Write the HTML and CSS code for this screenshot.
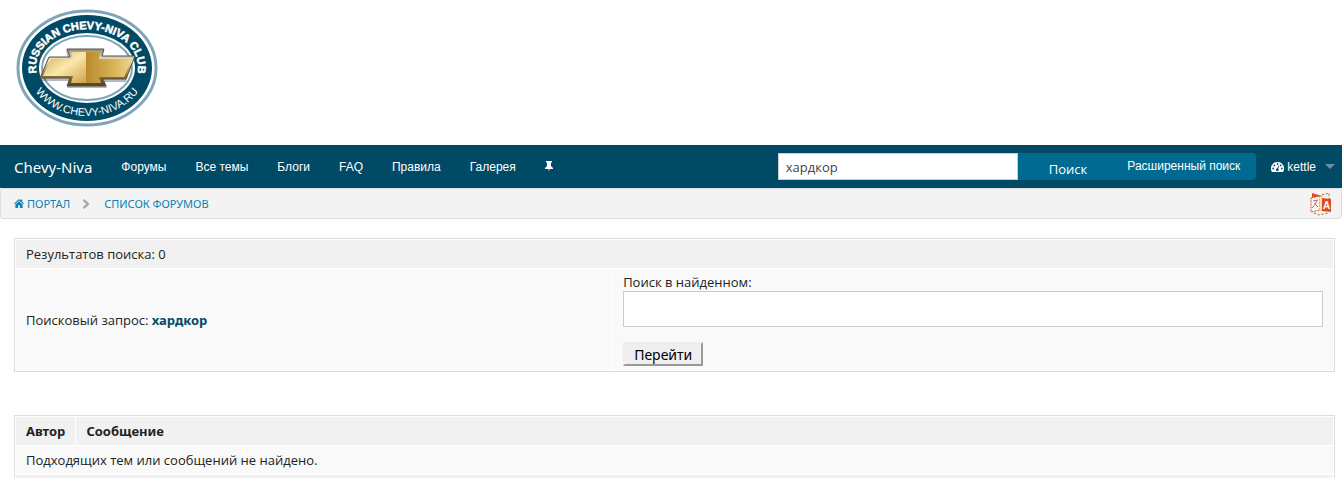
FILE: index.html
```html
<!DOCTYPE html>
<html lang="ru">
  <head>
    <meta charset="utf-8"/>
    <title>Chevy-Niva</title>
    <link rel="stylesheet" href="styles.css">
  </head>
  <body>
    <header class="header">
      <a class="logo" href="#" aria-label="Chevy-Niva">
        <svg width="144" height="120" viewBox="0 0 144 120">
          <defs>
            <linearGradient id="gold-left" x1="0" y1="0" x2="1" y2="1">
              <stop offset="0" stop-color="#d3a84c"/>
              <stop offset=".5" stop-color="#fae9ad"/>
              <stop offset="1" stop-color="#cfa14a"/>
            </linearGradient>
            <linearGradient id="gold-right" x1="0" y1="0" x2="1" y2="0">
              <stop offset="0" stop-color="#b88a2c"/>
              <stop offset=".6" stop-color="#d9b25a"/>
              <stop offset="1" stop-color="#f0d68e"/>
            </linearGradient>
            <linearGradient id="rim" x1="0" y1="0" x2="0" y2="1">
              <stop offset="0" stop-color="#8f8b80"/>
              <stop offset=".3" stop-color="#efe3c4"/>
              <stop offset=".7" stop-color="#98773a"/>
              <stop offset="1" stop-color="#4a4028"/>
            </linearGradient>
            <path id="arc-top" d="M24 72 A51 38 0 1 1 120 72"/>
            <path id="arc-bottom" d="M13 60 A59 48 0 0 0 131 60"/>
          </defs>
          <ellipse cx="72" cy="60" rx="69" ry="57" fill="#fff" stroke="#7fa6b8" stroke-width="3"/>
          <ellipse cx="72" cy="60" rx="65" ry="53" fill="#014a66"/>
          <ellipse cx="72" cy="60" rx="48" ry="35" fill="#fff"/>
          <ellipse cx="72" cy="60" rx="45" ry="32" fill="#fff" stroke="#7fa6b8" stroke-width="2"/>
          <path d="M35 51 H53 L51 42 H89 L87 49 H119 L111 74 H90 L92 80 H52 L54 73 H26 Z" fill="#263b43" opacity=".35"/>
          <path d="M34 49 H55 L52 41 H89 L87 48 H120 L111 71 H88 L91 78 H52 L55 70 H25 Z" fill="url(#rim)" stroke="#5c5138"/>
          <path d="M36 51 H58 L56 44 H71 V75 H56 L58 68 H28 Z" fill="url(#gold-left)"/>
          <path d="M71 44 H85 L84 51 H117 L109 69 H84 L86 75 H71 Z" fill="url(#gold-right)"/>
          <text class="logo-name"><textPath href="#arc-top" startOffset="50%">RUSSIAN CHEVY-NIVA CLUB</textPath></text>
          <text class="logo-site"><textPath href="#arc-bottom" startOffset="50%">WWW.CHEVY-NIVA.RU</textPath></text>
        </svg>
      </a>
    </header>

    <nav class="navbar">
      <a class="brand" href="#">Chevy-Niva</a>
      <ul class="menu">
        <li><a href="#">Форумы</a></li>
        <li><a href="#">Все темы</a></li>
        <li><a href="#">Блоги</a></li>
        <li><a href="#">FAQ</a></li>
        <li><a href="#">Правила</a></li>
        <li><a href="#">Галерея</a></li>
        <li>
          <a href="#" aria-label="Закрепить">
            <svg width="8" height="11" viewBox="0 0 8 11">
              <path d="M1 0 H7 V1 L6 2 V5 L8 7 V8 H4.5 L4 11 L3.5 8 H0 V7 L2 5 V2 L1 1 Z" fill="#fff"/>
            </svg>
          </a>
        </li>
      </ul>
      <form class="search">
        <input class="search-input" type="text" value="хардкор" aria-label="Поиск">
        <button class="search-button" type="button">Поиск</button>
        <a class="search-advanced" href="#">Расширенный поиск</a>
      </form>
      <a class="user" href="#">
        <svg width="13" height="10" viewBox="0 0 13 10">
          <path d="M6.500 0 A6.500 6.500 0 0 0 1 10 H12 A6.500 6.500 0 0 0 6.500 0 Z" fill="#fff"/>
          <g fill="#014a66">
            <circle cx="2.200" cy="6.500" r=".9"/>
            <circle cx="3.400" cy="3.400" r=".9"/>
            <circle cx="6.500" cy="2" r=".9"/>
            <circle cx="9.600" cy="3.400" r=".9"/>
            <circle cx="10.800" cy="6.500" r=".9"/>
            <circle cx="6.300" cy="7.800" r="1.400"/>
            <path d="M5.900 7.500 L7.300 3.600 L8 3.900 L6.900 7.900 Z"/>
          </g>
        </svg>
        kettle
        <span class="caret"></span>
      </a>
    </nav>

    <div class="breadcrumbs">
      <a class="crumb" href="#">
        <svg width="10" height="9" viewBox="0 0 10 9">
          <path d="M5 0 L6.800 1.600 V.6 H8.300 V3 L10 4.600 L9.400 5.300 L5 1.500 L.6 5.300 L0 4.600 Z M5 2.300 L8.600 5.400 V9 H5.900 V6.300 H4.100 V9 H1.400 V5.400 Z" fill="#0783b5"/>
        </svg>
        ПОРТАЛ
      </a>
      <svg class="divider" width="8" height="10" viewBox="0 0 8 10">
        <path d="M1.500 .8 L6 5 L1.500 9.200" fill="none" stroke="#aaa" stroke-width="2.400"/>
      </svg>
      <a class="crumb" href="#">СПИСОК ФОРУМОВ</a>
      <a class="translate" href="#" aria-label="Перевод">
        <svg width="22" height="24" viewBox="0 0 22 24">
          <path d="M2 1 L12 4 V6 L21 7 V20 L11 19 L10 4 L2 6 Z" fill="#dc4b23"/>
          <path d="M1 6 L10 4 V18 L1 20 Z" fill="#fff6f2" stroke="#dc4b23" stroke-dasharray="2 1"/>
          <path d="M10 4 L12 5 V19 L10 18 Z" fill="#fbe3a6"/>
          <path d="M3 9 L8 8 M7 8 Q6 13 2 16 M4 11 L8 15" fill="none" stroke="#cf6678"/>
          <path d="M12 3 L19 1 V7 M4 21 L9 23 L18 21" fill="none" stroke="#dc4b23" stroke-dasharray="2 2"/>
          <text class="translate-letter" x="13" y="17">A</text>
        </svg>
      </a>
    </div>

    <main class="content">
      <table class="forum-table">
        <tr>
          <td class="cat" colspan="2">Результатов поиска: 0</td>
        </tr>
        <tr>
          <td class="query">Поисковый запрос: <a href="#">хардкор</a></td>
          <td class="refine">
            <form>
              <label for="refine-input">Поиск в найденном:</label>
              <input class="refine-input" id="refine-input" type="text">
              <button class="refine-button" type="button">Перейти</button>
            </form>
          </td>
        </tr>
      </table>

      <table class="forum-table">
        <tr>
          <th class="author">Автор</th>
          <th>Сообщение</th>
        </tr>
        <tr>
          <td colspan="2">Подходящих тем или сообщений не найдено.</td>
        </tr>
        <tr>
          <td class="cat" colspan="2"></td>
        </tr>
      </table>
    </main>
  </body>
</html>
```
FILE: styles.css
```css
* {
  box-sizing: border-box;
}

html {
  overflow: hidden;
}

body {
  margin: 0;
  background: #fff;
  color: #222;
  font-family: "Open Sans", "Noto Sans", sans-serif;
  font-size: 13px;
  line-height: 18px;
}

a {
  text-decoration: none;
}

svg {
  display: block;
  flex: none;
}

.header {
  padding: 8px 15px 17px;
}

.logo {
  display: inline-block;
  vertical-align: top;
}

.logo-name,
.logo-site {
  fill: #fff;
  font-family: "Liberation Sans", Arial, sans-serif;
  text-anchor: middle;
}

.logo-name {
  font-size: 11px;
  font-weight: bold;
  stroke: #fff;
  stroke-width: .5px;
}

.logo-site {
  font-size: 11px;
}

.navbar {
  display: flex;
  align-items: center;
  height: 43px;
  padding: 0 7px 0 14px;
  background: #014a66;
  font-family: "Liberation Sans", Arial, sans-serif;
  font-size: 12px;
}

.navbar a {
  color: #fff;
}

.navbar .brand {
  margin-right: 29px;
  font-family: "Noto Sans", sans-serif;
  font-size: 15px;
}

.menu {
  display: flex;
  align-items: center;
  gap: 29px;
  margin: 0;
  padding: 0;
  list-style: none;
}

.search {
  display: flex;
  height: 27px;
  margin-left: auto;
}

.search-input {
  width: 240px;
  padding: 0 7px;
  border: 1px solid #ccc;
  background: #fff;
  color: #444;
  font-family: "Open Sans", "Noto Sans", sans-serif;
  font-size: 13px;
}

.search-button {
  padding: 4px 16px 0 31px;
  border: 0;
  background: #006a91;
  color: #fff;
  font-family: "Open Sans", "Noto Sans", sans-serif;
  font-size: 13px;
}

.search-advanced {
  padding: 0 16px 0 24px;
  border-radius: 0 4px 4px 0;
  background: #006a91;
  line-height: 27px;
}

.user {
  display: flex;
  align-items: center;
  gap: 3px;
  margin-left: 15px;
}

.caret {
  margin-left: 6px;
  border: 5px solid transparent;
  border-top-color: #6692a3;
  border-bottom: 0;
}

.breadcrumbs {
  display: flex;
  align-items: center;
  height: 31px;
  padding: 0 9px 0 13px;
  border: 1px solid #ddd;
  border-radius: 3px;
  background: #f3f3f3;
  font-family: "Noto Sans", sans-serif;
  font-size: 11px;
}

.crumb {
  display: flex;
  align-items: center;
  gap: 3px;
  color: #0783b5;
}

.divider {
  margin: 0 14px 0 12px;
}

.translate {
  margin-left: auto;
}

.translate-letter {
  fill: #fff;
  font-family: "Liberation Sans", sans-serif;
  font-size: 10px;
  font-weight: bold;
}

.content {
  padding: 19px 7px 0 14px;
}

.forum-table {
  width: 100%;
  border: 1px solid #ddd;
  border-spacing: 1px;
  background: #fff;
}

.forum-table + .forum-table {
  margin-top: 43px;
}

.forum-table th,
.forum-table td {
  padding: 5px 10px;
  background: #f9f9f9;
  text-align: left;
}

.forum-table th,
.forum-table .cat {
  background: #f1f1f1;
}

.forum-table th {
  font-family: "Noto Sans", sans-serif;
}

.forum-table .author {
  width: 58px;
}

.forum-table .query {
  width: 45.3%;
}

.query a {
  color: #014a66;
  font-family: "Noto Sans", sans-serif;
  font-weight: bold;
}

.forum-table .refine {
  padding-bottom: 4px;
}

.refine label {
  display: block;
  line-height: 17px;
}

.refine-input {
  display: block;
  width: 100%;
  height: 36px;
  margin-bottom: 15px;
  border: 1px solid #ccc;
  background: #fff;
}

.refine-button {
  display: block;
  height: 24px;
  padding: 0 9px;
  border: 2px outset #eee;
  background: #efefef;
  color: #000;
  font-family: "Noto Sans", sans-serif;
  font-size: 14px;
}
```
